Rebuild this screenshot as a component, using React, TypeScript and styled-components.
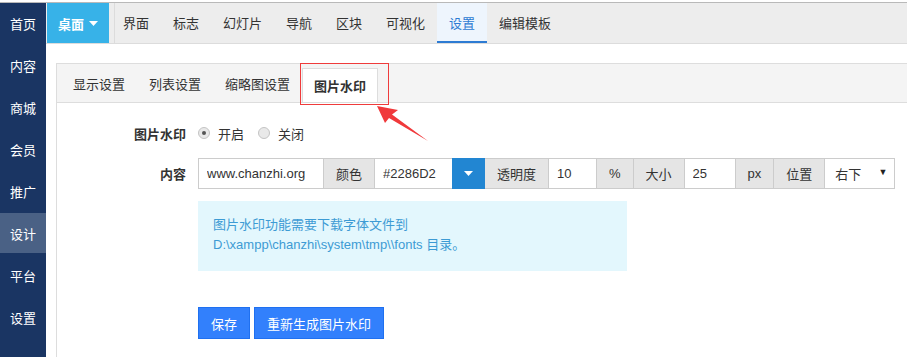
import styled, { createGlobalStyle } from "styled-components";

const GlobalStyle = createGlobalStyle`
  html, body {
    margin: 0;
    padding: 0;
    background: #fff;
  }
  body {
    font-family: "Liberation Sans", "Noto Sans CJK SC", sans-serif;
    font-size: 13px;
    color: #333;
  }
`;

const sideItems = ["首页", "内容", "商城", "会员", "推广", "设计", "平台", "设置"];
const navItems = ["界面", "标志", "幻灯片", "导航", "区块", "可视化", "设置", "编辑模板"];
const subItems = ["显示设置", "列表设置", "缩略图设置"];

const Caret: React.FC<{ color?: string }> = ({ color = "#fff" }) => (
  <svg width="9" height="5" viewBox="0 0 9 5">
    <polygon points="0,0 9,0 4.5,5" fill={color} />
  </svg>
);

export default function App() {
  return (
    <Page>
      <GlobalStyle />
      <Shell>
        <Sidebar>
          {sideItems.map((s) => (
            <SideItem key={s} $active={s === "设计"}>
              {s}
            </SideItem>
          ))}
        </Sidebar>
        <Main>
          <TopNav>
            <DeskButton>
              桌面 <Caret />
            </DeskButton>
            <NavList>
              {navItems.map((n) => (
                <NavItem key={n} $active={n === "设置"}>
                  {n}
                </NavItem>
              ))}
            </NavList>
          </TopNav>
          <Panel>
            <SubNav>
              {subItems.map((s) => (
                <SubItem key={s}>{s}</SubItem>
              ))}
              <ActiveTab>图片水印</ActiveTab>
            </SubNav>
            <Form>
              <Row $height={24} $gap={13}>
                <Label>图片水印</Label>
                <Radio $checked />
                <RadioText>开启</RadioText>
                <Radio />
                <RadioText>关闭</RadioText>
              </Row>
              <Row $height={31} $gap={12}>
                <Label>内容</Label>
                <InputGroup>
                  <Field $width={126} defaultValue="www.chanzhi.org" readOnly />
                  <Addon>颜色</Addon>
                  <Field $width={79} defaultValue="#2286D2" readOnly />
                  <ColorButton>
                    <Caret />
                  </ColorButton>
                  <Addon>透明度</Addon>
                  <Field $width={49} defaultValue="10" readOnly />
                  <Addon>%</Addon>
                  <Addon>大小</Addon>
                  <Field $width={52} defaultValue="25" readOnly />
                  <Addon>px</Addon>
                  <Addon>位置</Addon>
                  <SelectBox>
                    右下
                    <SelectArrow>▼</SelectArrow>
                  </SelectBox>
                </InputGroup>
              </Row>
              <Alert>
                图片水印功能需要下载字体文件到
                <br />
                D:\xampp\chanzhi\system\tmp\\fonts 目录。
              </Alert>
              <Actions>
                <PrimaryButton>保存</PrimaryButton>
                <PrimaryButton>重新生成图片水印</PrimaryButton>
              </Actions>
            </Form>
          </Panel>
        </Main>
      </Shell>
      <Annotation width="907" height="357" viewBox="0 0 907 357">
        <rect x="300.5" y="63.5" width="88" height="41" fill="none" stroke="#ef3b3b" />
        <polygon
          points="377,106 398,110 392,114.5 428,141 389,118 385,123"
          fill="#f0393b"
        />
      </Annotation>
    </Page>
  );
}

const Page = styled.div`
  position: relative;
  width: 907px;
  height: 357px;
  overflow: hidden;
  padding-top: 2px;
  box-sizing: border-box;
`;

const Shell = styled.div`
  display: flex;
  height: 355px;
  border-top: 1px solid #b9b9b9;
`;

const Sidebar = styled.div`
  width: 46px;
  flex-shrink: 0;
  background: #1a3563;
  display: flex;
  flex-direction: column;
  gap: 2px;
`;

const SideItem = styled.div<{ $active?: boolean }>`
  height: 40px;
  display: flex;
  align-items: center;
  justify-content: center;
  color: #fff;
  background: ${({ $active }) => ($active ? "#4a6185" : "transparent")};
`;

const Main = styled.div`
  flex: 1;
  display: flex;
  flex-direction: column;
`;

const TopNav = styled.div`
  height: 40px;
  display: flex;
  background: #ededed;
  border-bottom: 1px solid #dcdcdc;
  padding-left: 1px;
`;

const DeskButton = styled.div`
  width: 62px;
  display: flex;
  align-items: center;
  justify-content: center;
  gap: 5px;
  background: #37b2e8;
  color: #fff;
  font-weight: bold;
`;

const NavList = styled.div`
  display: flex;
  margin-left: 5px;
  border-left: 1px solid #dcdcdc;
`;

const NavItem = styled.div<{ $active?: boolean }>`
  height: 40px;
  box-sizing: border-box;
  display: flex;
  align-items: center;
  padding: 0 12px;
  color: ${({ $active }) => ($active ? "#2d7bd3" : "#333")};
  background: ${({ $active }) => ($active ? "#eef5fd" : "transparent")};
  border-bottom: 2px solid ${({ $active }) => ($active ? "#2d7bd3" : "transparent")};
  &:first-child {
    padding-left: 8px;
  }
`;

const Panel = styled.div`
  flex: 1;
  margin: 19px 0 0 10px;
  border-left: 1px solid #dddddd;
`;

const SubNav = styled.div`
  height: 38px;
  display: flex;
  align-items: flex-end;
  padding-left: 4px;
  background: #f4f4f4;
  border-top: 1px solid #dddddd;
  border-bottom: 1px solid #dddddd;
`;

const SubItem = styled.div`
  height: 38px;
  display: flex;
  align-items: center;
  padding: 0 12px;
`;

const ActiveTab = styled.div`
  height: 34px;
  box-sizing: border-box;
  display: flex;
  align-items: center;
  padding: 0 11px;
  background: #fff;
  border: 1px solid #dddddd;
  border-bottom: none;
  font-weight: bold;
`;

const Form = styled.div`
  padding-top: 18px;
`;

const Row = styled.div<{ $height: number; $gap: number }>`
  display: flex;
  align-items: center;
  height: ${({ $height }) => $height}px;
  margin-bottom: ${({ $gap }) => $gap}px;
`;

const Label = styled.div`
  width: 129px;
  margin-right: 12px;
  text-align: right;
  font-weight: bold;
`;

const Radio = styled.span<{ $checked?: boolean }>`
  width: 12px;
  height: 12px;
  box-sizing: border-box;
  border-radius: 50%;
  border: 1px solid #c4c4c4;
  background: #e9e9e9;
  margin-right: 8px;
  display: flex;
  align-items: center;
  justify-content: center;
  &::after {
    content: "";
    width: 4px;
    height: 4px;
    border-radius: 50%;
    background: ${({ $checked }) => ($checked ? "#555" : "transparent")};
  }
`;

const RadioText = styled.span`
  margin-right: 14px;
`;

const InputGroup = styled.div`
  display: flex;
  height: 31px;
`;

const segment = `
  height: 31px;
  box-sizing: border-box;
  border: 1px solid #cccccc;
  margin-left: -1px;
  font-family: "Liberation Sans", "Noto Sans CJK SC", sans-serif;
  font-size: 13px;
  color: #333;
  &:first-child {
    margin-left: 0;
  }
`;

const Field = styled.input<{ $width: number }>`
  ${segment}
  width: ${({ $width }) => $width}px;
  padding: 0 8px;
  background: #fff;
  outline: none;
`;

const Addon = styled.div`
  ${segment}
  display: flex;
  align-items: center;
  padding: 0 12px;
  background: #e5e5e5;
`;

const ColorButton = styled.div`
  ${segment}
  width: 33px;
  display: flex;
  align-items: center;
  justify-content: center;
  background: #2286d2;
  border-color: #2286d2;
  position: relative;
`;

const SelectBox = styled.div`
  ${segment}
  width: 71px;
  display: flex;
  align-items: center;
  justify-content: space-between;
  padding: 0 7px 0 10px;
  background: #fff;
`;

const SelectArrow = styled.span`
  font-size: 9px;
  color: #222;
  margin-top: -3px;
`;

const Alert = styled.div`
  width: 429px;
  box-sizing: border-box;
  margin-left: 141px;
  padding: 14px 15px 16px;
  line-height: 20px;
  background: #e3f7fd;
  color: #3d9bd4;
`;

const Actions = styled.div`
  display: flex;
  gap: 4px;
  margin: 36px 0 0 141px;
`;

const PrimaryButton = styled.button`
  height: 32px;
  padding: 0 12px;
  border: 1px solid #1f70f0;
  background: #3280fc;
  color: #fff;
  font-family: "Liberation Sans", "Noto Sans CJK SC", sans-serif;
  font-size: 13px;
  border-radius: 0;
`;

const Annotation = styled.svg`
  position: absolute;
  left: 0;
  top: 0;
  pointer-events: none;
`;
